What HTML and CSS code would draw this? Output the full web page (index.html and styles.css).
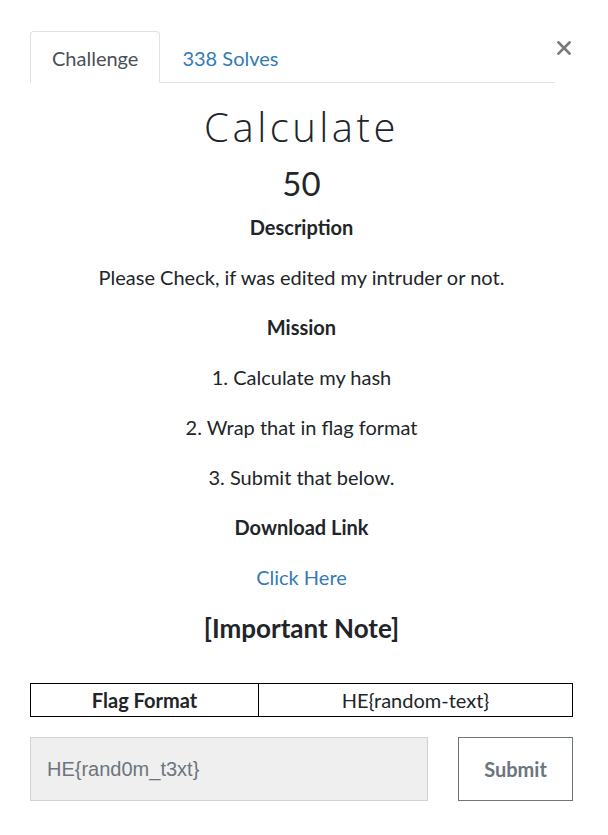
FILE: index.html
```html
<!DOCTYPE html>
<html>
<head>
<meta charset="utf-8">
<link rel="stylesheet" href="styles.css">
</head>
<body>
<div class="modal">
  <button class="close" aria-label="Close">
    <svg width="14" height="14" viewBox="0 0 14 14"><path d="M1.5 1.5L12.5 12.5M12.5 1.5L1.5 12.5" stroke="#7a7a7a" stroke-width="2.6" stroke-linecap="square"/></svg>
  </button>
  <ul class="tabs">
    <li class="tab active">Challenge</li>
    <li class="tab link">338 Solves</li>
  </ul>
  <div class="body">
    <h2 class="title">Calculate</h2>
    <h3 class="value">50</h3>
    <p class="line strong first">Description</p>
    <p class="line">Please Check, if was edited my intruder or not.</p>
    <p class="line strong">Mission</p>
    <p class="line">1. Calculate my hash</p>
    <p class="line">2. Wrap that in flag format</p>
    <p class="line">3. Submit that below.</p>
    <p class="line strong">Download Link</p>
    <p class="line"><a class="dl">Click Here</a></p>
    <h3 class="note">[Important Note]</h3>
    <table class="fmt">
      <tr><th>Flag Format</th><td>HE{random-text}</td></tr>
    </table>
    <div class="submit-row">
      <input class="answer" placeholder="HE{rand0m_t3xt}">
      <button class="submit">Submit</button>
    </div>
  </div>
</div>
</body>
</html>
```
FILE: styles.css
```css
html, body {
  margin: 0;
  padding: 0;
  background: #fff;
}
body {
  font-family: Lato, "Liberation Sans", sans-serif;
  color: #212529;
  width: 608px;
  height: 835px;
  overflow: hidden;
}
.modal {
  position: relative;
  padding: 31px 35px 0 30px;
}
.close {
  position: absolute;
  top: 41px;
  left: 557px;
  background: none;
  border: 0;
  padding: 0;
  line-height: 0;
}
.tabs {
  list-style: none;
  margin: 0;
  padding: 0;
  display: flex;
  width: 525px;
  border-bottom: 1px solid #dee2e6;
}
.tab {
  height: 50px;
  box-sizing: border-box;
  padding: 0 21px;
  font-size: 20px;
  line-height: 52px;
  margin-bottom: -1px;
  border: 1px solid transparent;
  border-top-left-radius: 4px;
  border-top-right-radius: 4px;
}
.tab.active {
  color: #495057;
  border-color: #dee2e6 #dee2e6 #fff;
  height: 52px;
  background: #fff;
}
.tab.link {
  color: #337ab7;
}
.body {
  width: 543px;
  text-align: center;
}
.title {
  font-family: "Open Sans", sans-serif;
  font-weight: 300;
  font-size: 40px;
  letter-spacing: 3.5px;
  line-height: 48px;
  margin: 20px 0 0;
  color: #212529;
}
.value {
  font-weight: 400;
  font-size: 33px;
  line-height: 40px;
  margin: 12px 0 0;
}
.line {
  font-size: 20px;
  line-height: 30px;
  margin: 0;
  height: 50px;
}
.line.first {
  margin-top: 9px;
}
.strong {
  font-weight: 700;
}
.dl {
  color: #337ab7;
  text-decoration: none;
}
.note {
  font-size: 26px;
  font-weight: 700;
  line-height: 32px;
  margin: 0;
}
.fmt {
  border-collapse: collapse;
  width: 543px;
  margin-top: 39px;
  font-size: 20px;
}
.fmt th, .fmt td {
  border: 1px solid #000;
  height: 32px;
  padding: 0;
  line-height: 32px;
}
.fmt th {
  width: 227px;
  font-weight: 700;
}
.fmt td {
  font-weight: 400;
}
.submit-row {
  display: flex;
  justify-content: space-between;
  margin-top: 20px;
}
.answer {
  width: 398px;
  height: 64px;
  box-sizing: border-box;
  background: #efefef;
  border: 1px solid #cfd2d8;
  padding: 0 16px;
  font-family: "Liberation Sans", Arial, sans-serif;
  font-size: 20px;
  color: #555;
  outline: none;
}
.answer::placeholder {
  color: #6c757d;
}
.submit {
  width: 115px;
  height: 64px;
  box-sizing: border-box;
  background: #fff;
  border: 1px solid #6c757d;
  font-family: Lato, sans-serif;
  font-weight: 700;
  font-size: 20px;
  color: #6c757d;
  padding: 0;
}
```
